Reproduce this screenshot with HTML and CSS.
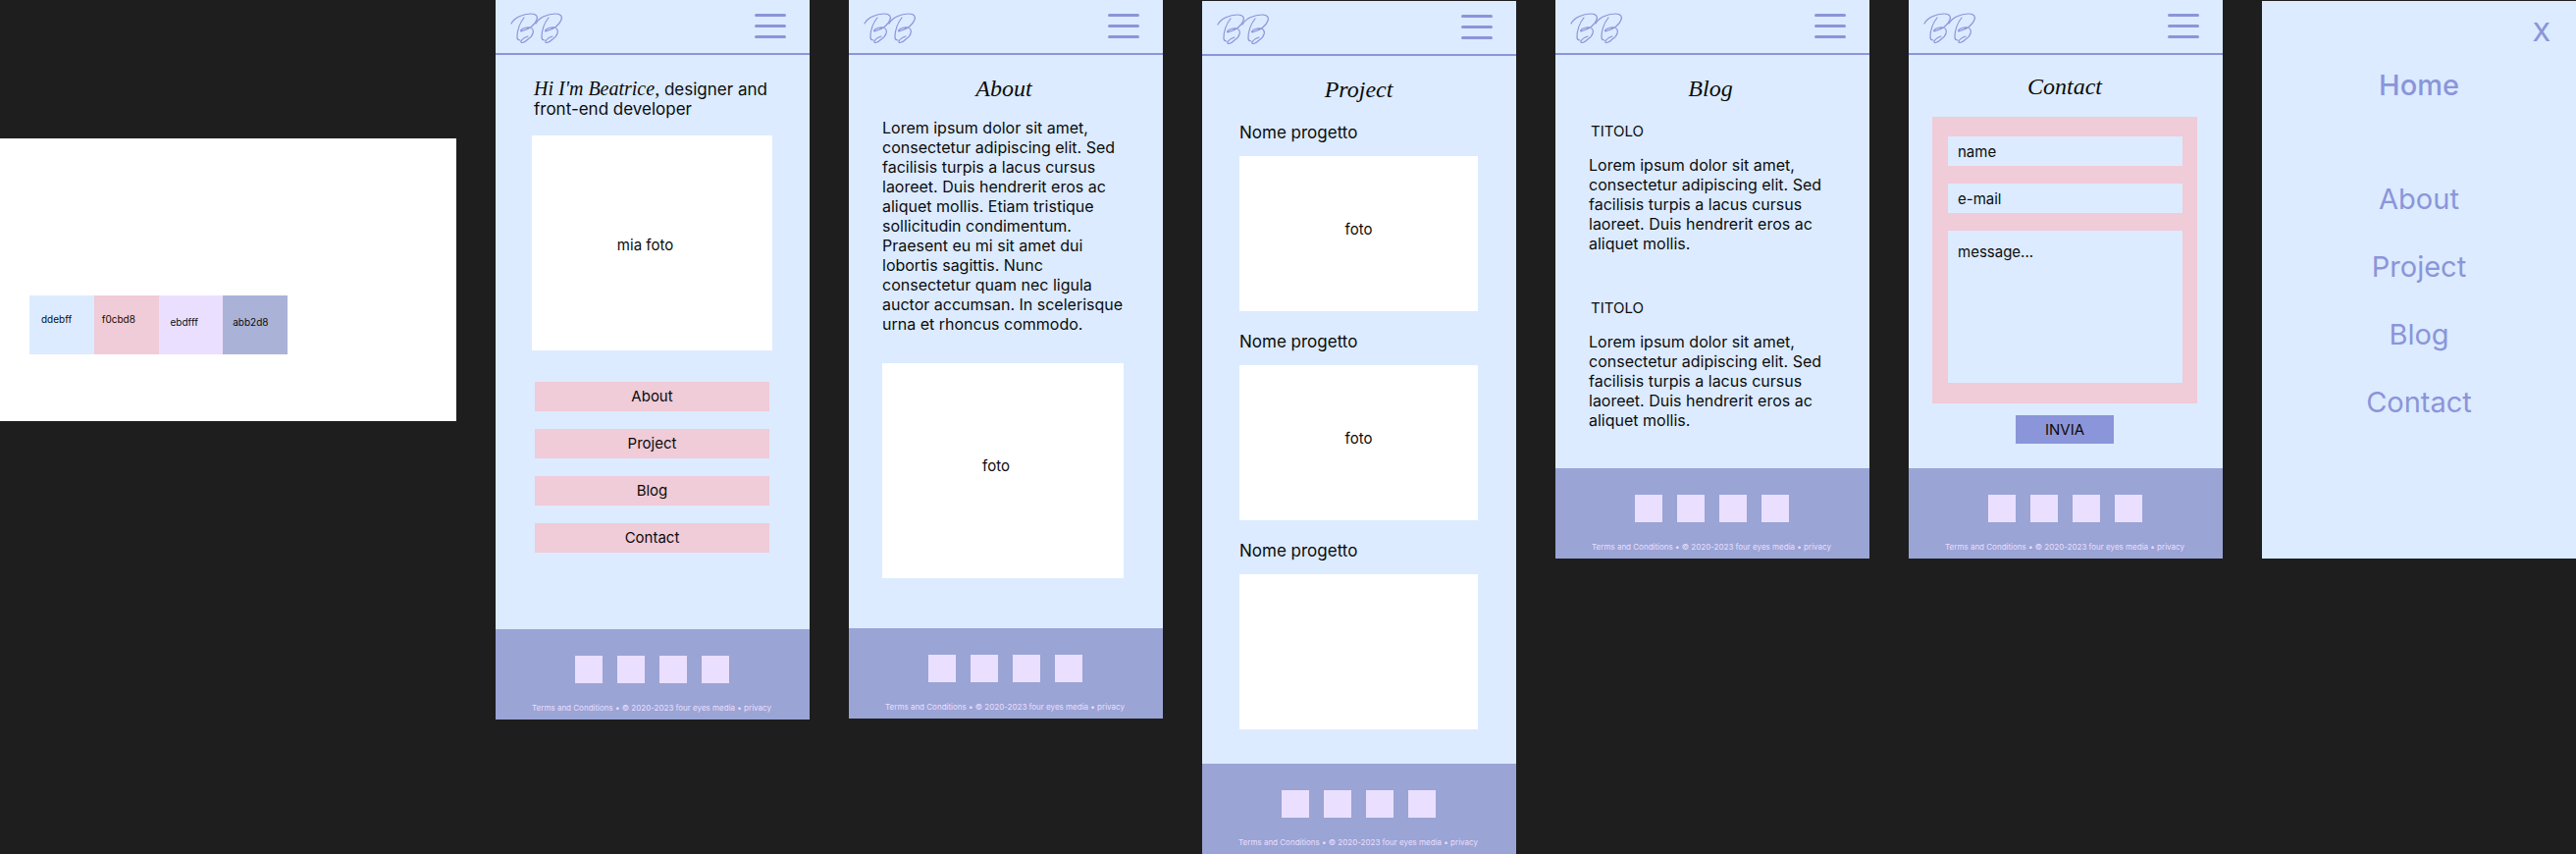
FILE: index.html
```html
<!DOCTYPE html>
<html lang="en">
<head>
<meta charset="utf-8">
<meta name="viewport" content="width=device-width, initial-scale=1">
<title>Beatrice – portfolio wireframes</title>
<link rel="stylesheet" href="styles.css">
</head>
<body>
<svg class="defs" aria-hidden="true">
  <symbol id="logo" viewBox="0 0 54 32">
    <g fill="none" stroke="currentColor" stroke-width="1.2" stroke-linecap="round" stroke-linejoin="round">
      <path id="mark" d="M1 11C4 5 13 1 21 1c6 0 7 3 6 6-2 6-9 10-16 12-2-1 4-5 9-4 6 2 3 9-2 12-3 3-8 5-7 2 1-2 4-4 7-5M14 5C10 10 7 18 7 25c0 2 1 3 3 3"/>
      <use href="#mark" x="25"/>
    </g>
  </symbol>
</svg>
<main class="board">
  <section class="palette" aria-label="Palette">
    <ul class="swatches">
      <li class="swatch sky">ddebff</li>
      <li class="swatch pink">f0cbd8</li>
      <li class="swatch lilac">ebdfff</li>
      <li class="swatch indigo">abb2d8</li>
    </ul>
  </section>

  <article class="phone" id="home">
    <header class="bar">
      <a class="logo" href="#home" aria-label="BB"><svg><use href="#logo"/></svg></a>
      <button class="burger" type="button" aria-label="Menu"><span></span><span></span><span></span></button>
    </header>
    <div class="content home">
      <h1 class="intro"><em>Hi I'm Beatrice,</em> designer and<br>front-end developer</h1>
      <div class="photo tall">mia foto</div>
      <nav class="links">
        <a href="#about">About</a>
        <a href="#project">Project</a>
        <a href="#blog">Blog</a>
        <a href="#contact">Contact</a>
      </nav>
    </div>
    <footer class="foot">
      <div class="social"><i></i><i></i><i></i><i></i></div>
      <p>Terms and Conditions • © 2020-2023 four eyes media • privacy</p>
    </footer>
  </article>

  <article class="phone" id="about">
    <header class="bar">
      <a class="logo" href="#home" aria-label="BB"><svg><use href="#logo"/></svg></a>
      <button class="burger" type="button" aria-label="Menu"><span></span><span></span><span></span></button>
    </header>
    <div class="content about">
      <h2 class="title">About</h2>
      <p class="text">Lorem ipsum dolor sit amet,<br>consectetur adipiscing elit. Sed<br>facilisis turpis a lacus cursus<br>laoreet. Duis hendrerit eros ac<br>aliquet mollis. Etiam tristique<br>sollicitudin condimentum.<br>Praesent eu mi sit amet dui<br>lobortis sagittis. Nunc<br>consectetur quam nec ligula<br>auctor accumsan. In scelerisque<br>urna et rhoncus commodo.</p>
      <div class="photo tall">foto</div>
    </div>
    <footer class="foot">
      <div class="social"><i></i><i></i><i></i><i></i></div>
      <p>Terms and Conditions • © 2020-2023 four eyes media • privacy</p>
    </footer>
  </article>

  <article class="phone lowered" id="project">
    <header class="bar">
      <a class="logo" href="#home" aria-label="BB"><svg><use href="#logo"/></svg></a>
      <button class="burger" type="button" aria-label="Menu"><span></span><span></span><span></span></button>
    </header>
    <div class="content project">
      <h2 class="title">Project</h2>
      <h3 class="name">Nome progetto</h3>
      <div class="photo">foto</div>
      <h3 class="name">Nome progetto</h3>
      <div class="photo">foto</div>
      <h3 class="name">Nome progetto</h3>
      <div class="photo"></div>
    </div>
    <footer class="foot">
      <div class="social"><i></i><i></i><i></i><i></i></div>
      <p>Terms and Conditions • © 2020-2023 four eyes media • privacy</p>
    </footer>
  </article>

  <article class="phone" id="blog">
    <header class="bar">
      <a class="logo" href="#home" aria-label="BB"><svg><use href="#logo"/></svg></a>
      <button class="burger" type="button" aria-label="Menu"><span></span><span></span><span></span></button>
    </header>
    <div class="content blog">
      <h2 class="title">Blog</h2>
      <section class="post">
        <h3>TITOLO</h3>
        <p class="text">Lorem ipsum dolor sit amet,<br>consectetur adipiscing elit. Sed<br>facilisis turpis a lacus cursus<br>laoreet. Duis hendrerit eros ac<br>aliquet mollis.</p>
      </section>
      <section class="post">
        <h3>TITOLO</h3>
        <p class="text">Lorem ipsum dolor sit amet,<br>consectetur adipiscing elit. Sed<br>facilisis turpis a lacus cursus<br>laoreet. Duis hendrerit eros ac<br>aliquet mollis.</p>
      </section>
    </div>
    <footer class="foot">
      <div class="social"><i></i><i></i><i></i><i></i></div>
      <p>Terms and Conditions • © 2020-2023 four eyes media • privacy</p>
    </footer>
  </article>

  <article class="phone" id="contact">
    <header class="bar">
      <a class="logo" href="#home" aria-label="BB"><svg><use href="#logo"/></svg></a>
      <button class="burger" type="button" aria-label="Menu"><span></span><span></span><span></span></button>
    </header>
    <form class="content contact">
      <h2 class="title">Contact</h2>
      <div class="fields">
        <input type="text" aria-label="name" placeholder="name">
        <input type="email" aria-label="e-mail" placeholder="e-mail">
        <textarea aria-label="message" placeholder="message..."></textarea>
      </div>
      <button class="send" type="submit">INVIA</button>
    </form>
    <footer class="foot">
      <div class="social"><i></i><i></i><i></i><i></i></div>
      <p>Terms and Conditions • © 2020-2023 four eyes media • privacy</p>
    </footer>
  </article>

  <aside class="phone lowered menu">
    <button class="close" type="button" aria-label="Close menu">X</button>
    <nav class="menu-links">
      <a class="current" href="#home">Home</a>
      <a href="#about">About</a>
      <a href="#project">Project</a>
      <a href="#blog">Blog</a>
      <a href="#contact">Contact</a>
    </nav>
  </aside>
</main>
</body>
</html>
```
FILE: styles.css
```css
:root {
  --sky: #dcebff;
  --pink: #f0cbd8;
  --lilac: #ebdfff;
  --indigo: #abb2d8;
  --foot: #9aa4d5;
  --accent: #8b95d9;
  --ink: #0b0b0b;
}

* { box-sizing: border-box; }

body {
  margin: 0;
  background: #1e1e1e;
  color: var(--ink);
  font-family: Inter, "Noto Sans", sans-serif;
  font-size: 16px;
  line-height: 20px;
}

h1, h2, h3, p, ul { margin: 0; padding: 0; font-weight: 400; }
a { color: inherit; text-decoration: none; }
button, input, textarea { font: inherit; color: inherit; border: 0; border-radius: 0; }
button { cursor: pointer; }
.defs { display: none; }

.board {
  display: grid;
  grid-template-columns: 465fr repeat(6, 320fr);
  column-gap: 40px;
  align-items: start;
}

.palette {
  margin-top: 141px;
  padding: 160px 172px 68px 30px;
  background: #fff;
}
.swatches { display: grid; grid-template-columns: repeat(4, 1fr); list-style: none; }
.swatch { height: 60px; padding: 14px 8px; font-size: 10px; }
.sky { background: var(--sky); padding-left: 12px; }
.pink { background: var(--pink); }
.lilac { background: var(--lilac); padding: 17px 12px; }
.indigo { background: var(--indigo); padding: 17px 10px; }

.phone { background: var(--sky); }
.lowered { margin-top: 1px; }

.bar {
  display: flex;
  justify-content: space-between;
  align-items: flex-start;
  height: 56px;
  padding: 13px 24px 0 15px;
  border-bottom: 2px solid var(--accent);
}
.logo { color: var(--accent); }
.logo svg { display: block; width: 54px; height: 32px; }
.burger { display: grid; gap: 8px; width: 32px; padding: 1px 0; background: none; }
.burger span { height: 3px; border-radius: 2px; background: var(--accent); }

.title, .intro em {
  font-family: "Liberation Serif", serif;
  font-style: italic;
}
.title { font-size: 24px; line-height: 32px; text-align: center; }

.photo {
  display: grid;
  place-items: center;
  height: 158px;
  padding-bottom: 8px;
  background: #fff;
  font-size: 15px;
}
.tall { height: 219px; padding: 4px 14px 0 0; }

.home { padding: 24px 38px 78px 37px; }
.intro { padding: 0 0 17px 2px; font-size: 17px; }
.intro em { font-size: 20px; }
.links { display: grid; gap: 18px; padding: 32px 3px 0; }
.links a { height: 30px; line-height: 30px; text-align: center; font-size: 15px; background: var(--pink); }

.about { padding: 18px 30px 51px 34px; }
.about .title { padding-right: 8px; }
.about .text { padding-top: 14px; }
.about .photo { margin: 30px 10px 0 0; padding: 0 14px 10px 0; }

.project { padding: 18px 39px 35px 38px; }
.name { font-size: 17px; padding: 21px 0 14px; }
.project .title + .name { padding-top: 18px; }

.blog { padding: 18px 30px 39px 34px; }
.blog .title { padding-right: 8px; }
.post { padding-top: 18px; }
.post h3 { padding-left: 2px; font-size: 15px; }
.post .text { padding-top: 14px; }
.post + .post { padding-top: 46px; }

.contact { display: grid; justify-items: center; padding: 16px 26px 25px 24px; }
.fields { display: grid; gap: 18px; width: 100%; margin-top: 15px; padding: 20px 15px 21px 16px; background: var(--pink); }
.fields input, .fields textarea { display: block; width: 100%; padding: 0 10px; background: var(--sky); font-size: 15px; }
.fields input { height: 30px; }
.fields textarea { height: 155px; padding-top: 12px; resize: none; }
.fields ::placeholder { color: var(--ink); opacity: 1; }
.send { width: 100px; height: 29px; margin-top: 12px; padding: 0; background: var(--accent); font-size: 15px; }

.foot { height: 92px; padding: 27px 2px 0 0; background: var(--foot); color: var(--lilac); text-align: center; font-size: 8px; }
.social { display: flex; justify-content: center; gap: 15px; }
.social i { width: 28px; height: 28px; background: var(--lilac); }
.foot p { padding-top: 15px; white-space: nowrap; }

.menu { height: 568px; color: var(--accent); }
.close { display: block; margin-left: auto; padding: 16px 26px 6px 0; background: none; font-size: 26px; font-weight: 500; line-height: 32px; }
.menu-links { display: grid; justify-items: center; gap: 37px; font-size: 29px; line-height: 32px; }
.current { margin: 16px 0 47px; font-weight: 500; }
```
